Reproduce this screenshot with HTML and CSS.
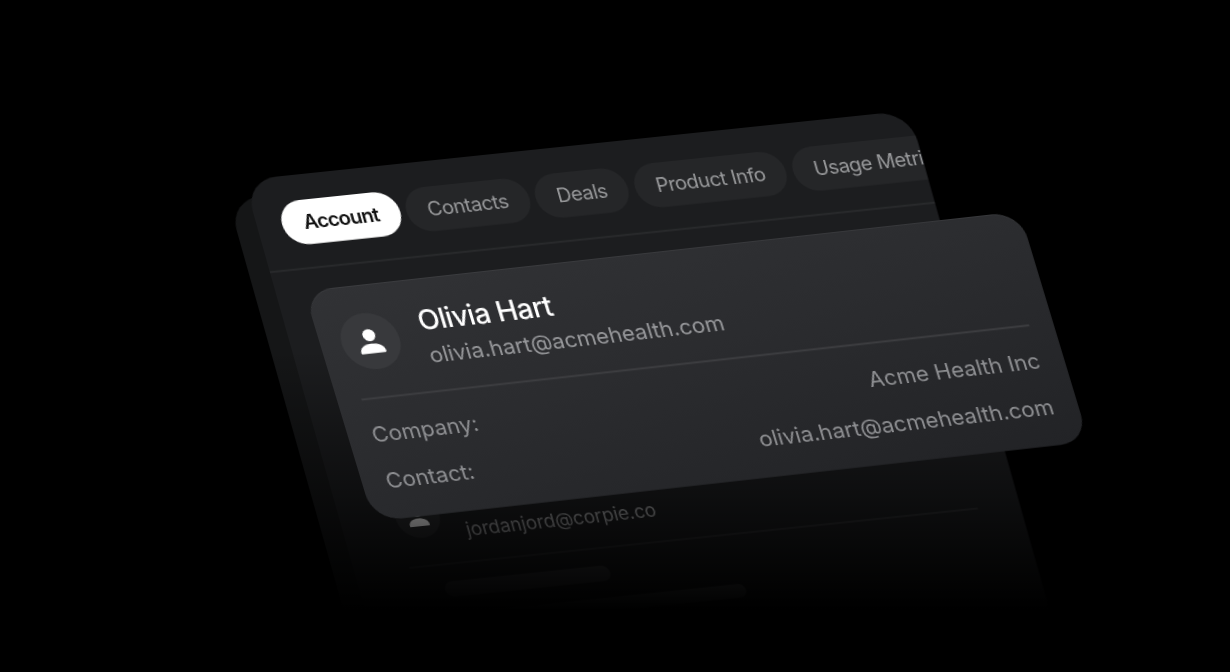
FILE: index.html
```html
<!DOCTYPE html>
<html lang="en">
<head>
<meta charset="utf-8">
<title>Account card</title>
<link rel="stylesheet" href="styles.css">
</head>
<body>
<main class="scene">
  <section class="stack">
    <div class="panel-back"></div>
    <div class="panel">
      <nav class="tabs">
        <span class="tab tab-active">Account</span>
        <span class="tab">Contacts</span>
        <span class="tab">Deals</span>
        <span class="tab">Product Info</span>
        <span class="tab">Usage Metrics</span>
      </nav>
      <div class="list">
        <div class="list-person">
          <div class="list-avatar">
            <svg class="person" viewBox="0 0 24 24"><circle cx="12" cy="7" r="5"/><path d="M2 21c0-4.600 4.500-7 10-7s10 2.400 10 7c0 .6-.4 1-1 1H3c-.6 0-1-.4-1-1z"/></svg>
          </div>
          <div class="list-email">jordanjord@corpie.co</div>
        </div>
        <div class="list-line"></div>
        <div class="skeleton skeleton-a"></div>
        <div class="skeleton skeleton-b"></div>
      </div>
    </div>
  </section>
  <div class="fade"></div>
  <article class="card">
    <header class="card-head">
      <div class="avatar">
        <svg class="person" viewBox="0 0 24 24"><circle cx="12" cy="7" r="5"/><path d="M2 21c0-4.600 4.500-7 10-7s10 2.400 10 7c0 .6-.4 1-1 1H3c-.6 0-1-.4-1-1z"/></svg>
      </div>
      <div class="who">
        <div class="name">Olivia Hart</div>
        <div class="email">olivia.hart@acmehealth.com</div>
      </div>
    </header>
    <div class="rule"></div>
    <div class="row"><span>Company:</span><span>Acme Health Inc</span></div>
    <div class="row"><span>Contact:</span><span>olivia.hart@acmehealth.com</span></div>
  </article>
</main>
</body>
</html>
```
FILE: styles.css
```css
* { box-sizing: border-box; }
html, body { margin: 0; height: 100%; background: #000; }
body { font-family: Inter, "Liberation Sans", sans-serif; overflow: hidden; }

.scene { position: relative; width: 1230px; height: 672px; overflow: hidden; background: #000; }

.stack {
  position: absolute; left: 0; top: 0;
  width: 669px; height: 540px;
  transform-origin: 0 0;
  transform: matrix(.994, -.104, .27, .96, 244, 180);
  filter: blur(.3px);
}
.panel-back {
  position: absolute; left: -21px; top: 18px;
  width: 669px; height: 522px;
  border-radius: 32px;
  background: #151617;
}
.panel {
  position: relative;
  width: 669px; height: 540px;
  border-radius: 32px;
  overflow: hidden;
  background: #1c1d1f;
}
.fade {
  position: absolute; inset: 0;
  background: linear-gradient(rgba(0,0,0,0) 350px, rgba(0,0,0,.5) 490px, #000 610px);
}
.tabs {
  display: flex; gap: 6.3px;
  height: 97px; padding: 25.5px 0 0 25px;
  border-bottom: 2px solid #292a2c;
  overflow: hidden;
}
.tab {
  flex: none;
  height: 46px; line-height: 46px; padding: 0 21.5px;
  border-radius: 23px;
  background: #252628;
  color: #98999b;
  font-size: 20px;
  letter-spacing: -.5px;
}
.tab-active { background: #fff; color: #111; font-weight: 600; letter-spacing: -.8px; }

.list { padding: 246px 0 0 55px; }
.list-person { display: flex; align-items: flex-start; gap: 22px; height: 47px; }
.list-avatar {
  width: 44px; height: 44px; border-radius: 50%;
  margin-top: -6px;
  background: #2a2b2d;
  display: flex; align-items: center; justify-content: center;
}
.list-avatar .person { width: 24px; height: 24px; fill: #fff; }
.list-email { color: #a4a5a7; font-size: 18.7px; line-height: 24px; margin-top: 23px; }
.list-line { height: 2px; margin: 19px 42px 0 0; background: #2e2f31; }
.skeleton { background: #3c3d3f; border-radius: 8px; }
.skeleton-a { width: 166px; height: 16px; margin: 17px 0 0 29px; }
.skeleton-b { width: 293px; height: 14px; margin: 17px 0 0 30px; background: #505153; }

.card {
  position: absolute; left: 0; top: 0;
  width: 718px; height: 240px;
  padding: 29px 24.500px 0 24px;
  border-radius: 28px;
  background: linear-gradient(168deg, #313235 0%, #2b2c2f 45%, #222326 100%);
  box-shadow: inset 0 1px 0 rgba(255,255,255,.05);
  transform-origin: 0 0;
  transform: matrix(.9965, -.111, .29, .96, 304, 291);
  filter: blur(.3px);
}
.card-head { display: flex; gap: 23px; height: 74px; margin-left: -3px; }
.avatar {
  flex: none; width: 58px; height: 58px; border-radius: 50%;
  background: #38393c;
  display: flex; align-items: center; justify-content: center;
}
.avatar .person { width: 30px; height: 30px; fill: #fff; }
.who { margin-top: -3px; }
.name { color: #fff; font-size: 28px; line-height: 34px; font-weight: 500; letter-spacing: -.5px; }
.email { color: #97989b; font-size: 22px; line-height: 32px; margin: 3px 0 0 1px; }
.rule { height: 2px; margin-top: 12px; background: #3d3e41; }
.row {
  display: flex; justify-content: space-between;
  color: #8e8f92; font-size: 22px; line-height: 32px;
}
.rule + .row { margin-top: 20px; }
.row + .row { margin-top: 15px; }
```
